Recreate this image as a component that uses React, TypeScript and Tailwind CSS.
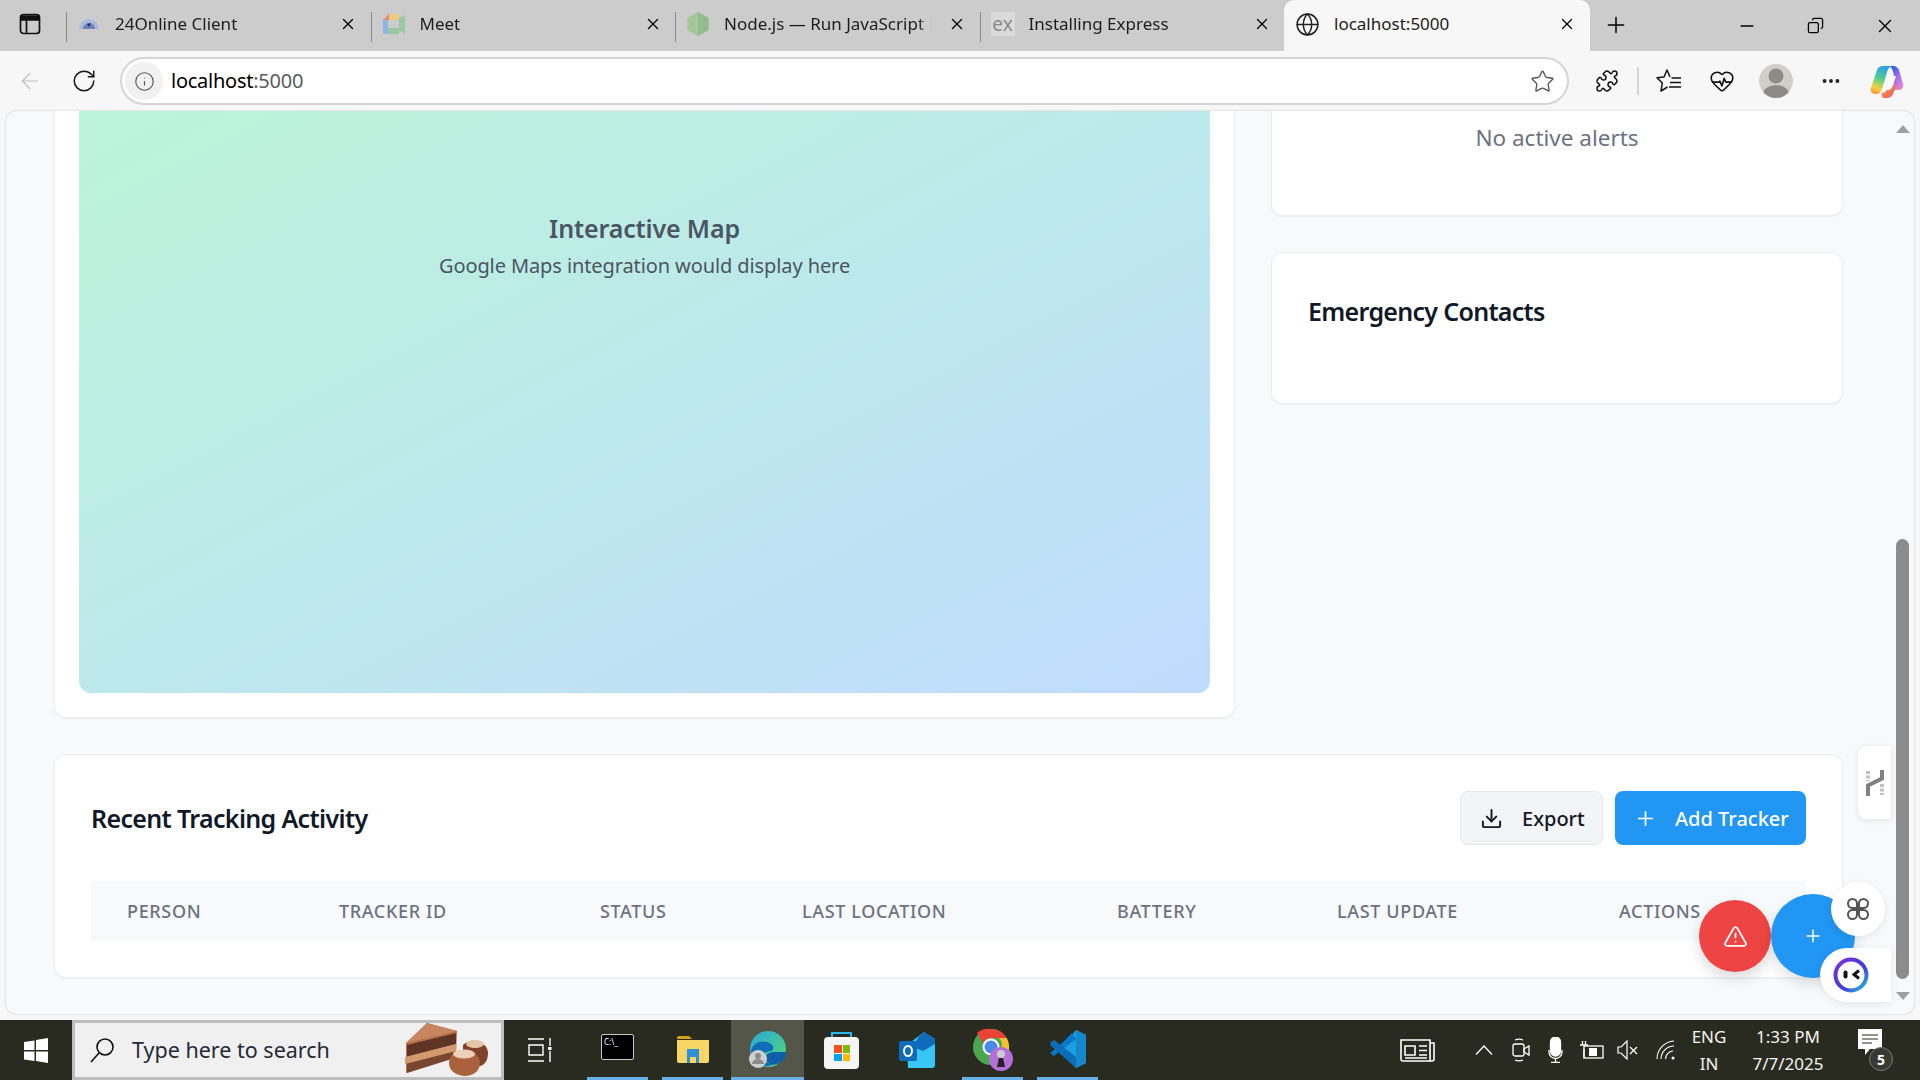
import React from 'react';
import {
  ArrowLeft,
  Copy,
  Download,
  Ellipsis,
  Globe,
  HeartPulse,
  Info,
  Minus,
  Plus,
  Puzzle,
  RotateCw,
  Star,
  TriangleAlert,
  X,
} from 'lucide-react';

const tabs = [
  { title: '24Online Client', icon: 'online' },
  { title: 'Meet', icon: 'meet' },
  { title: 'Node.js — Run JavaScript E', icon: 'node' },
  { title: 'Installing Express', icon: 'ex' },
];

const columns = ['Person', 'Tracker ID', 'Status', 'Last Location', 'Battery', 'Last Update', 'Actions'];

function TabIcon({ name }: { name: string }) {
  if (name === 'online') {
    return (
      <svg width="24" height="24" viewBox="0 0 24 24">
        <path d="M2 17a10 10 0 0 1 20 0z" fill="#a9b8dc" />
        <path d="M6 17a6 6 0 0 1 12 0z" fill="#6d80b8" />
        <path d="M10 12l4-1-2 4z" fill="#27325c" />
      </svg>
    );
  }
  if (name === 'meet') {
    return (
      <svg width="24" height="24" viewBox="0 0 24 24">
        <path d="M7 2h10v6H5z" fill="#eccb7b" />
        <path d="M1 8h5v8H1z" fill="#8fb4e8" />
        <path d="M1 16h5v6H3a2 2 0 0 1-2-2z" fill="#8fb4e8" />
        <path d="M6 16h11v6H6z" fill="#98c9a0" />
        <path d="M17 6v12l6 4V3z" fill="#98c9a0" />
        <path d="M1 8l6-6v6z" fill="#e08f7f" />
      </svg>
    );
  }
  if (name === 'node') {
    return (
      <svg width="24" height="26" viewBox="0 0 24 26">
        <path d="M12 1l10.5 6v12L12 25 1.500 19V7z" fill="#a3c797" />
        <path d="M12 1l10.500 6v12L12 25z" fill="#93bb8c" />
      </svg>
    );
  }
  return (
    <span className="flex h-[24px] w-[24px] items-center justify-center bg-[#dadada] text-[19px] text-[#8a8a8a]">ex</span>
  );
}

function Tab({ title, icon }: { title: string; icon: string }) {
  return (
    <div className="flex h-[51px] w-[304.5px] items-center pb-[3px]">
      <div className="mt-[6px] h-[30px] w-px bg-[#8d8d8d]" />
      <div className="ml-[9px] flex w-[26px] shrink-0 justify-center">
        <TabIcon name={icon} />
      </div>
      <span className="ml-[13px] w-[207px] overflow-hidden text-[17px] whitespace-nowrap text-[#1d1d1d] [mask-image:linear-gradient(to_right,black_94%,transparent)]">
        {title}
      </span>
      <X size={18} strokeWidth={1.7} className="ml-[17px] text-black" />
    </div>
  );
}

function FavoritesIcon() {
  return (
    <svg width="26" height="26" viewBox="0 0 26 26" fill="none" stroke="#111" strokeWidth="1.5" strokeLinejoin="round">
      <path d="M14 9l-3-7-3 7-7 .8 5.300 5.200L5 23l6.500-4" />
      <path d="M15.500 10H25M14 14.500h11M13 19h12" />
    </svg>
  );
}

function CopilotIcon() {
  return (
    <svg width="34" height="33" viewBox="0 0 34 33">
      <defs>
        <linearGradient id="copilotLeft" x1="0.6" y1="0" x2="0.3" y2="1">
          <stop offset="0" stopColor="#2f9fee" />
          <stop offset="0.45" stopColor="#4fcf8c" />
          <stop offset="0.8" stopColor="#f3d23f" />
          <stop offset="1" stopColor="#f59a3c" />
        </linearGradient>
        <linearGradient id="copilotRight" x1="0.2" y1="0" x2="0.8" y2="1">
          <stop offset="0" stopColor="#1f5fe0" />
          <stop offset="0.45" stopColor="#9a6cf0" />
          <stop offset="1" stopColor="#f08ac0" />
        </linearGradient>
        <linearGradient id="copilotBottom" x1="0" y1="0" x2="1" y2="1">
          <stop offset="0" stopColor="#f7a13e" />
          <stop offset="1" stopColor="#ee4f5e" />
        </linearGradient>
      </defs>
      <path d="M13 1h9c-3 1-4 3-5 6l-5 17c-1 3-3 5-6 5H5c-3 0-5-3-4-6L7 5c1-3 3-4 6-4z" fill="url(#copilotLeft)" />
      <path d="M20 1h3c3 0 5 2 6 4l4 14c1 3-1 6-4 6h-7l2-8c1-5-1-13-4-16z" fill="url(#copilotRight)" />
      <path d="M12 28c2 0 4-1 5-4l1-3h8l-3 8c-1 2-3 4-6 4h-3c-2 0-3-3-2-5z" fill="url(#copilotBottom)" />
      <path d="M19 11h7l-3 9c-1 3-2 4-4 5h-3l1-2z" fill="#fff" />
    </svg>
  );
}

function BrowserChrome() {
  return (
    <>
      <div className="flex h-[51px] shrink-0 items-center bg-[#cccccc]">
        <div className="flex w-[66px] justify-center pr-[6px] pb-[3px]">
          <svg width="22" height="22" viewBox="0 0 22 22" fill="none" stroke="#111" strokeWidth="1.7">
            <rect x="1.500" y="1.500" width="19" height="19" rx="3" />
            <path d="M2 3h18v4H2z" fill="#111" />
            <path d="M7.500 7v13" />
          </svg>
        </div>
        {tabs.map((tab) => (
          <Tab key={tab.title} title={tab.title} icon={tab.icon} />
        ))}
        <div className="flex h-[51px] w-[306px] items-center self-end rounded-t-[10px] bg-[#f7f7f7] pr-[14px] pb-[3px] pl-[11px]">
          <Globe size={25} strokeWidth={1.4} className="text-[#222]" />
          <span className="ml-[14px] flex-1 text-[17px] text-[#1d1d1d]">localhost:5000</span>
          <X size={18} strokeWidth={1.7} className="text-black" />
        </div>
        <Plus size={26} strokeWidth={1.4} className="-mt-[2px] ml-[13px] text-black" />
        <Minus size={20} strokeWidth={1.7} className="ml-[108px] text-black" />
        <Copy size={17} strokeWidth={1.8} className="ml-[50px] -scale-x-100 text-black" />
        <X size={22} strokeWidth={1.5} className="ml-[50px] text-black" />
      </div>

      <div className="flex h-[60px] shrink-0 items-center bg-[#f7f7f7]">
        <ArrowLeft size={26} strokeWidth={1.1} className="ml-[17px] text-[#bdbdbd]" />
        <RotateCw size={26} strokeWidth={1.4} className="ml-[28px] text-[#1a1a1a]" />
        <div className="ml-[23px] flex h-[48px] w-[1449px] items-center rounded-full border-2 border-[#d5d5d5] bg-white pr-[12px]">
          <div className="ml-[3px] flex h-[38px] w-[38px] items-center justify-center rounded-full bg-[#f1f1f1]">
            <Info size={21} strokeWidth={1.3} className="text-[#555]" />
          </div>
          <span className="ml-[8px] flex-1 text-[20px] tracking-[-0.25px] text-black">
            localhost<span className="text-[#5c5c5c]">:5000</span>
          </span>
          <Star size={25} strokeWidth={1.3} className="text-[#555]" />
        </div>
        <Puzzle size={24} strokeWidth={1.5} className="ml-[26px] text-[#111]" />
        <div className="ml-[18px] h-[28px] w-[2px] bg-[#d5d5d5]" />
        <div className="ml-[17px]">
          <FavoritesIcon />
        </div>
        <HeartPulse size={26} strokeWidth={1.5} className="ml-[27px] text-[#111]" />
        <div className="ml-[24px] flex h-[34px] w-[34px] items-end justify-center overflow-hidden rounded-full bg-[#d0cfca]">
          <svg width="34" height="34" viewBox="0 0 34 34" fill="#8e8b86">
            <circle cx="17" cy="12" r="7.500" />
            <ellipse cx="17" cy="30" rx="13" ry="9" />
          </svg>
        </div>
        <Ellipsis size={22} strokeWidth={2.2} className="ml-[27px] text-[#222]" />
        <div className="ml-[28px]">
          <CopilotIcon />
        </div>
      </div>
    </>
  );
}

function Card({ className, children }: { className: string; children: React.ReactNode }) {
  return <div className={`border border-[#eceef1] bg-white shadow-[0_1px_2px_rgba(0,0,0,0.05)] ${className}`}>{children}</div>;
}

function Page() {
  return (
    <div className="relative mx-[6px] flex h-[903px] shrink-0 overflow-hidden rounded-[10px] bg-[#f8f9fb] shadow-[0_0_2px_rgba(0,0,0,0.25)]">
      <div className="flex w-[1885px] flex-col gap-[36px] px-[48px]">
        <div className="flex items-start gap-[36px]">
          <Card className="w-[1181px] rounded-b-[12px] border-t-0 px-[24px] pb-[24px]">
            <div className="flex h-[582px] flex-col items-center rounded-b-[12px] bg-linear-to-br from-[#bbf5d8] to-[#bfdbfe] pt-[97px] text-[#4b5563]">
              <span className="text-[25px] leading-[40px] font-semibold tracking-[-0.15px]">Interactive Map</span>
              <span className="text-[20px] leading-[36px] tracking-[-0.1px]">Google Maps integration would display here</span>
            </div>
          </Card>
          <div className="flex w-[572px] flex-col gap-[36px]">
            <Card className="flex h-[105px] justify-center rounded-b-[12px] border-t-0 pt-[12px]">
              <span className="text-[22.5px] leading-[30px] text-[#6b7280]">No active alerts</span>
            </Card>
            <Card className="h-[152px] rounded-[12px] px-[36px] pt-[38px]">
              <h3 className="text-[25px] leading-[40px] font-semibold tracking-[-0.7px] text-[#111827]">Emergency Contacts</h3>
            </Card>
          </div>
        </div>

        <Card className="h-[224px] rounded-[12px] px-[36px] pt-[36px]">
          <div className="flex h-[54px] items-center justify-between">
            <h3 className="pt-[2px] text-[25px] font-semibold tracking-[-0.65px] text-[#111827]">Recent Tracking Activity</h3>
            <div className="flex gap-[12px]">
              <button className="flex h-[54px] w-[143px] items-center rounded-[8px] border border-[#e5e7eb] bg-[#f3f4f6] pl-[19px] text-[20px] font-medium text-[#111827]">
                <Download size={23} strokeWidth={2} />
                <span className="ml-[19px] pt-[2px]">Export</span>
              </button>
              <button className="flex h-[54px] w-[191px] items-center rounded-[8px] bg-[#2196f3] pl-[19px] text-[20px] font-medium text-white">
                <Plus size={23} strokeWidth={1.8} />
                <span className="ml-[18px] pt-[2px]">Add Tracker</span>
              </button>
            </div>
          </div>
          <div className="mt-[36px] grid h-[60px] grid-cols-[212px_261px_202px_315px_220px_282px_1fr] items-center bg-[#f8f9fb] pl-[36px] text-[18px] font-medium tracking-[0.65px] text-[#6b7280] uppercase">
            {columns.map((column) => (
              <span key={column}>{column}</span>
            ))}
          </div>
        </Card>
      </div>

      <div className="flex w-[23px] flex-col items-center py-[14px]">
        <div className="h-0 w-0 border-x-[7px] border-b-[8px] border-x-transparent border-b-[#a0a0a0]" />
        <div className="mt-[406px] h-[440px] w-[13px] rounded-full bg-[#8c8c8c]" />
        <div className="mt-[13px] h-0 w-0 border-x-[7px] border-t-[8px] border-x-transparent border-t-[#a0a0a0]" />
      </div>

      {/* floating buttons and the extension tabs that sit over the page */}
      <div className="absolute top-[635px] left-[1852px] flex h-[73px] w-[33px] items-center justify-center rounded-l-[8px] bg-white shadow-[0_1px_6px_rgba(0,0,0,0.1)]">
        <svg width="20" height="26" viewBox="0 0 20 26" fill="none" stroke="#808080" strokeWidth="4">
          <path d="M3 26V15.500l14-7V0" />
          <path d="M3 1v10M17 14v11" stroke="#c0c0c0" strokeDasharray="3 1.500" />
        </svg>
      </div>
      <div className="absolute top-[789px] left-[1693px] flex h-[72px] w-[72px] items-center justify-center rounded-full bg-[#ef4444] text-white shadow-[0_6px_14px_rgba(0,0,0,0.15)]">
        <TriangleAlert size={25} strokeWidth={1.7} />
      </div>
      <div className="absolute top-[783px] left-[1765px] flex h-[84px] w-[84px] items-center justify-center rounded-full bg-[#2196f3] text-white shadow-[0_6px_14px_rgba(0,0,0,0.12)]">
        <Plus size={20} strokeWidth={1.8} />
      </div>
      <div className="absolute top-[771px] left-[1825px] flex h-[54px] w-[54px] items-center justify-center rounded-full bg-white shadow-[0_2px_8px_rgba(0,0,0,0.08)]">
        <svg width="24" height="24" viewBox="0 0 24 24" fill="none" stroke="#555" strokeWidth="2">
          <path d="M11 11H6.500a4.500 4.500 0 1 1 4.500-4.500zM13 11V6.500a4.500 4.500 0 1 1 4.500 4.500zM11 13v4.500A4.500 4.500 0 1 1 6.500 13zM13 13h4.500a4.500 4.500 0 1 1-4.500 4.500z" />
        </svg>
      </div>
      <div className="absolute top-[837px] left-[1814px] flex h-[54px] w-[71px] items-center rounded-l-full bg-white pl-[13px] shadow-[0_2px_8px_rgba(0,0,0,0.08)]">
        <svg width="36" height="36" viewBox="0 0 36 36" fill="none">
          <defs>
            <linearGradient id="botRing" x1="0" y1="0" x2="1" y2="1">
              <stop offset="0" stopColor="#7c2ee0" />
              <stop offset="0.6" stopColor="#3f3fd8" />
              <stop offset="1" stopColor="#22c8dc" />
            </linearGradient>
          </defs>
          <circle cx="18" cy="18" r="15.500" stroke="url(#botRing)" strokeWidth="4" fill="#fff" />
          <rect x="10.500" y="13.500" width="4" height="8" rx="2" fill="#111" />
          <path d="M26 13.500l-5 4 5 4" stroke="#111" strokeWidth="3" />
        </svg>
      </div>
    </div>
  );
}

function Cake() {
  return (
    <svg width="84" height="54" viewBox="0 0 84 54">
      <path d="M1 20L22 0l30 8-1 25L1 50z" fill="#b5714a" />
      <path d="M22 0l30 8-51 12z" fill="#c58660" />
      <path d="M2 22l49-12v11L2 34z" fill="#5f3425" />
      <path d="M2 40l48-12v7L2 50z" fill="#7a4630" />
      <path d="M0 34l51-13v7L0 41z" fill="#d39a6e" />
      <path d="M58 22c3-3 8-5 13-4 7 1 12 6 12 12 0 7-3 12-8 13-6 1-12-1-17-6z" fill="#7f432b" />
      <ellipse cx="70" cy="21" rx="9" ry="4" fill="#e7c4a6" />
      <path d="M44 40c0-8 7-13 15-13s16 5 16 13c0 8-7 13-15 13s-16-5-16-13z" fill="#a9613e" />
      <ellipse cx="59" cy="31" rx="11" ry="4.500" fill="#eed0b6" />
    </svg>
  );
}

function TaskbarApps() {
  return (
    <div className="flex h-[60px] items-stretch">
      <div className="flex w-[61px] items-center justify-center border-b-[3px] border-[#6ab0e8] pb-[4px]">
        <div className="h-[26px] w-[33px] rounded-[2px] border border-[#c8c8c8] bg-black pt-[2px] pl-[2px] text-[8px] leading-[9px] text-white">C:\_</div>
      </div>
      <div className="ml-[14px] flex w-[61px] items-center justify-center border-b-[3px] border-[#6ab0e8]">
        <svg width="32" height="28" viewBox="0 0 32 28">
          <path d="M0 3a2 2 0 0 1 2-2h10l3 3H0z" fill="#d8a013" />
          <path d="M0 5h32v21a2 2 0 0 1-2 2H2a2 2 0 0 1-2-2z" fill="#f7d666" />
          <path d="M10 14h12v14H10z" fill="#2f8ed6" />
          <path d="M13 22h6v6h-6z" fill="#f7d666" />
        </svg>
      </div>
      <div className="ml-[8px] flex w-[73px] items-center justify-center border-b-[3px] border-[#6ab0e8] bg-[#55564a]">
        <svg width="38" height="40" viewBox="0 0 38 40">
          <defs>
            <linearGradient id="edgeA" x1="0" y1="0" x2="1" y2="1">
              <stop offset="0" stopColor="#2aa7de" />
              <stop offset="1" stopColor="#55d86e" />
            </linearGradient>
          </defs>
          <circle cx="19" cy="20" r="18" fill="url(#edgeA)" />
          <path d="M2 22c2-9 12-12 20-7 3 2 3 6 0 7-4 1-9 1-9 6 0 4 6 8 13 6-9 7-23 2-24-12z" fill="#0f6cb8" />
          <path d="M23 23h14c0 5-3 10-9 12-6 2-12-2-12-6 0-3 4-5 7-6z" fill="#0c5ea8" />
          <circle cx="9" cy="30" r="9" fill="#cfcfcf" />
          <circle cx="9" cy="27" r="3" fill="#8a8a8a" />
          <path d="M3 35a6 5 0 0 1 12 0z" fill="#8a8a8a" />
        </svg>
      </div>
      <div className="ml-[20px] flex w-[35px] items-center justify-center">
        <svg width="35" height="37" viewBox="0 0 35 37">
          <path d="M8 6V1h19v5" fill="none" stroke="#2db5ee" strokeWidth="2" />
          <rect x="0" y="5" width="35" height="32" rx="4" fill="#f5f5f5" />
          <path d="M10 13h8v8h-8z" fill="#f25022" />
          <path d="M19 13h7v8h-7z" fill="#7fba00" />
          <path d="M10 22h8v7h-8z" fill="#00a4ef" />
          <path d="M19 22h7v7h-7z" fill="#ffb900" />
        </svg>
      </div>
      <div className="ml-[40px] flex w-[36px] items-center justify-center">
        <svg width="36" height="38" viewBox="0 0 36 38">
          <path d="M8 14L25 1l11 7v26a3 3 0 0 1-3 3H9z" fill="#38c6f4" />
          <path d="M20 5l5-4 11 7v5L24 20 14 16z" fill="#0f6cbd" />
          <rect x="0" y="10" width="18" height="20" rx="2" fill="#0f6cbd" />
          <ellipse cx="9" cy="20" rx="4" ry="5" fill="none" stroke="#fff" strokeWidth="2" />
        </svg>
      </div>
      <div className="ml-[27px] flex w-[61px] items-center justify-center border-b-[3px] border-[#6ab0e8]">
        <svg width="40" height="44" viewBox="0 0 40 44">
          <circle cx="18" cy="20" r="18" fill="#4aa64f" />
          <path d="M18 2a18 18 0 0 1 15.600 9H18a9 9 0 0 0-8 5L4 6a18 18 0 0 1 14-4z" fill="#ea4335" />
          <path d="M33.600 11A18 18 0 0 1 20 38l7-15a9 9 0 0 0-1-12z" fill="#fbc02d" />
          <circle cx="18" cy="20" r="8.500" fill="#fff" />
          <circle cx="18" cy="20" r="6.500" fill="#4b87e8" />
          <circle cx="28" cy="32" r="12" fill="#b46fd8" />
          <circle cx="28" cy="27" r="4" fill="#ccc" />
          <path d="M24 40l2-9h4l2 9z" fill="#222" />
        </svg>
      </div>
      <div className="ml-[14px] flex w-[61px] items-center justify-center border-b-[3px] border-[#6ab0e8]">
        <svg width="36" height="38" viewBox="0 0 36 38">
          <path d="M26 0l10 5v28l-10 5L9 20z" fill="#1b9de2" />
          <path d="M26 0v38l10-5V5z" fill="#1587cc" />
          <path d="M26 9L10 21l-6 5-4-3 6-5-6-5 4-3 6 5L22 3z" fill="#0a78c9" />
          <path d="M4 10l22 17v11L0 15z" fill="#0a6db6" />
        </svg>
      </div>
    </div>
  );
}

function Tray() {
  return (
    <div className="flex items-center pr-[27px]">
      <svg width="36" height="25" viewBox="0 0 36 25" fill="none" stroke="#fff" strokeWidth="1.600">
        <path d="M1 2h29v21H3a2 2 0 0 1-2-2zM30 5h4v16a2 2 0 0 1-2 2h-2" />
        <path d="M5 8h10v9H5zM19 8h8M19 12.500h8M19 17h8M5 20h22" />
      </svg>
      <svg className="ml-[39px]" width="18" height="10" viewBox="0 0 18 10" fill="none" stroke="#fff" strokeWidth="1.300">
        <path d="M1 9.500l8-8.500 8 8.500" />
      </svg>
      <svg className="ml-[19px]" width="18" height="24" viewBox="0 0 18 24" fill="none" stroke="#fff" strokeWidth="1.300">
        <rect x="1" y="6" width="11" height="12" rx="2" />
        <path d="M12 11l5-3v9l-5-3zM3 2a10 10 0 0 1 8 0M3 22a10 10 0 0 0 8 0" />
      </svg>
      <svg className="ml-[18px]" width="15" height="26" viewBox="0 0 15 26" fill="none" stroke="#fff" strokeWidth="1.300">
        <rect x="2.500" y="0" width="10" height="19" rx="5" fill="#fff" />
        <path d="M1 13v2a6.500 6.500 0 0 0 13 0v-2M7.500 21.500V25M3 25.300h9" />
      </svg>
      <svg className="ml-[17px]" width="24" height="18" viewBox="0 0 24 18" fill="none" stroke="#fff" strokeWidth="1.300">
        <rect x="4" y="5" width="19" height="12" />
        <rect x="9" y="7" width="8" height="8" fill="#fff" stroke="none" />
        <path d="M0 4h8M2.500 0v4M5.500 0v4M4 8v9" />
      </svg>
      <svg className="ml-[13px]" width="21" height="20" viewBox="0 0 21 20" fill="none" stroke="#fff" strokeWidth="1.200">
        <path d="M1 7h3l6-6v18l-6-6H1zM13 7l7 7M20 7l-7 7" />
      </svg>
      <svg className="ml-[18px]" width="19" height="20" viewBox="0 0 19 20" fill="none" stroke="#fff" strokeWidth="1.100">
        <path d="M1 19A18 18 0 0 1 18 1M5 19A13 13 0 0 1 18 6M9.500 19A8 8 0 0 1 17 11" />
        <circle cx="17" cy="18" r="1.500" fill="#fff" stroke="none" />
      </svg>
      <div className="ml-[14px] flex w-[40px] flex-col items-center text-[17px] leading-[27px] text-[#f2f2f2]">
        <span>ENG</span>
        <span>IN</span>
      </div>
      <div className="ml-[22px] flex w-[74px] flex-col items-center text-[17px] leading-[27px] text-[#f2f2f2]">
        <span className="whitespace-nowrap">1:33 PM</span>
        <span>7/7/2025</span>
      </div>
      <div className="relative ml-[33px] h-[42px] w-[35px]">
        <svg width="24" height="28" viewBox="0 0 24 28" fill="#fff">
          <path d="M0 0h24v20H12l-5 6v-6H0z" />
          <path d="M4 6h16M4 10h16M4 14h10" stroke="#2a2b20" strokeWidth="1.200" />
        </svg>
        <span className="absolute right-0 bottom-0 flex h-[24px] w-[24px] items-center justify-center rounded-full border border-[#777] bg-[#3a3a35] text-[14px] font-bold">5</span>
      </div>
    </div>
  );
}

function Taskbar() {
  return (
    <div className="mt-[6px] flex h-[60px] shrink-0 bg-[#2a2b20] text-white">
      <div className="flex w-[72px] items-center justify-center">
        <svg width="24" height="25" viewBox="0 0 24 25" fill="#fff">
          <path d="M0 4l10.500-1.600V12H0zM12 2.100L24 0v12H12zM0 13.500h10.500v9.600L0 21.500zM12 13.500h12V25l-12-2z" />
        </svg>
      </div>
      <div className="flex w-[432px] items-center border-[3px] border-[#bdbdbd] bg-[#f0f0f0] pr-[12px] pl-[15px] text-[#1f2a36]">
        <svg width="24" height="25" viewBox="0 0 24 25" fill="none" stroke="#111" strokeWidth="1.600">
          <circle cx="15" cy="9" r="8" />
          <path d="M9 15l-8 9" />
        </svg>
        <span className="ml-[18px] flex-1 text-[21.5px]">Type here to search</span>
        <Cake />
      </div>
      <div className="flex w-[83px] items-center justify-center pr-[11px]">
        <svg width="24" height="26" viewBox="0 0 24 26" fill="none" stroke="#fff" strokeWidth="1.400">
          <path d="M0 2h16M0 24h16M1 8h14v10H1zM22 1v8M22 14v11" />
          <rect x="20" y="10" width="3.500" height="3" fill="#fff" stroke="none" />
        </svg>
      </div>
      <TaskbarApps />
      <div className="flex-1" />
      <Tray />
    </div>
  );
}

export default function App() {
  return (
    <div className="flex h-[1080px] w-[1920px] flex-col overflow-hidden bg-[#f7f7f7] font-['Noto_Sans','Open_Sans',sans-serif]">
      <BrowserChrome />
      <Page />
      <Taskbar />
    </div>
  );
}
